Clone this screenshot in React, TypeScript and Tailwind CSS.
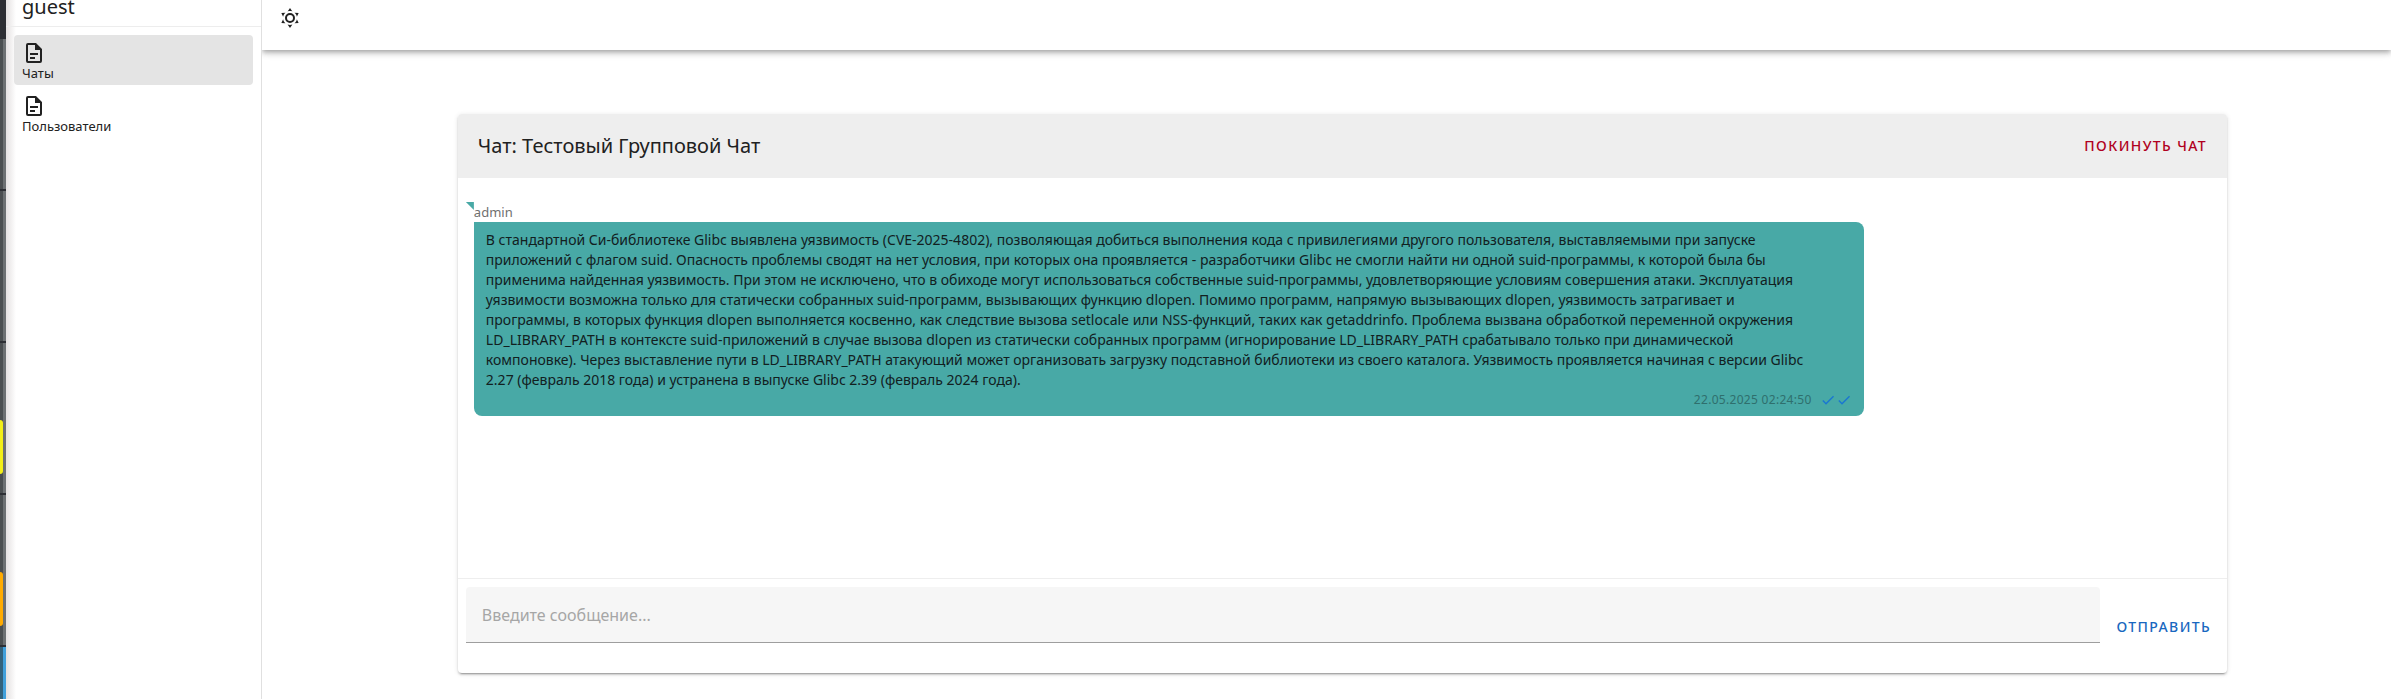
const PATHS = {
  file: "M6,2A2,2 0 0,0 4,4V20A2,2 0 0,0 6,22H18A2,2 0 0,0 20,20V8L14,2H6M6,4H13V9H18V20H6V4M8,12V14H16V12H8M8,16V18H13V16H8Z",
  sun: "M12,7A5,5 0 0,1 17,12A5,5 0 0,1 12,17A5,5 0 0,1 7,12A5,5 0 0,1 12,7M12,9A3,3 0 0,0 9,12A3,3 0 0,0 12,15A3,3 0 0,0 15,12A3,3 0 0,0 12,9M12,2L14.39,5.42C13.65,5.15 12.84,5 12,5C11.16,5 10.35,5.15 9.61,5.42L12,2M3.34,7L7.5,6.65C6.9,7.16 6.36,7.78 5.94,8.5C5.5,9.24 5.25,10 5.11,10.79L3.34,7M3.36,17L5.12,13.23C5.26,14 5.53,14.78 5.95,15.5C6.37,16.24 6.91,16.86 7.5,17.37L3.36,17M20.65,7L18.88,10.79C18.74,10 18.47,9.23 18.05,8.5C17.63,7.78 17.1,7.15 16.5,6.64L20.65,7M20.64,17L16.5,17.36C17.09,16.85 17.62,16.22 18.04,15.5C18.46,14.77 18.73,14 18.87,13.21L20.64,17M12,22L9.59,18.56C10.33,18.83 11.14,19 12,19C12.82,19 13.63,18.83 14.37,18.56L12,22Z",
  check: "M21,7L9,19L3.5,13.5L4.91,12.09L9,16.17L19.59,5.59L21,7Z",
};

function Icon({ name, className }: { name: keyof typeof PATHS; className: string }) {
  return (
    <svg viewBox="0 0 24 24" fill="currentColor" aria-hidden="true" className={className}>
      <path d={PATHS[name]} />
    </svg>
  );
}

const NAV = [
  { label: "Чаты", active: true },
  { label: "Пользователи", active: false },
];

const MESSAGE =
  "В стандартной Си-библиотеке Glibc выявлена уязвимость (CVE-2025-4802), позволяющая добиться выполнения кода с привилегиями другого пользователя, выставляемыми при запуске приложений с флагом suid. Опасность проблемы сводят на нет условия, при которых она проявляется - разработчики Glibc не смогли найти ни одной suid-программы, к которой была бы применима найденная уязвимость. При этом не исключено, что в обиходе могут использоваться собственные suid-программы, удовлетворяющие условиям совершения атаки. Эксплуатация уязвимости возможна только для статически собранных suid-программ, вызывающих функцию dlopen. Помимо программ, напрямую вызывающих dlopen, уязвимость затрагивает и программы, в которых функция dlopen выполняется косвенно, как следствие вызова setlocale или NSS-функций, таких как getaddrinfo. Проблема вызвана обработкой переменной окружения LD_LIBRARY_PATH в контексте suid-приложений в случае вызова dlopen из статически собранных программ (игнорирование LD_LIBRARY_PATH срабатывало только при динамической компоновке). Через выставление пути в LD_LIBRARY_PATH атакующий может организовать загрузку подставной библиотеки из своего каталога. Уязвимость проявляется начиная с версии Glibc 2.27 (февраль 2018 года) и устранена в выпуске Glibc 2.39 (февраль 2024 года).";

function Backdrop() {
  return (
    <div aria-hidden="true" className="flex w-[6px] shrink-0 flex-col bg-[#2c2e33]">
      <div className="h-[39px]" />
      <Slot />
      <Slot />
      <Slot chip="bg-[#f2ef18]" />
      <Slot chip="bg-[#ffab00]" />
      <div className="flex grow">
        <div className="w-[3px] bg-[#32617b]" />
        <div className="w-[3px] bg-[#41a0db]" />
      </div>
    </div>
  );
}

function Slot({ chip }: { chip?: string }) {
  return (
    <div className="mb-[2px] flex h-[150px] shrink-0">
      <div className="flex w-[3px] items-end bg-[#4a4e50] pb-[19px]">
        {chip && <div className={`h-[54px] w-full rounded-r-[3px] ${chip}`} />}
      </div>
      <div className="w-[3px] bg-[#6c7072]" />
    </div>
  );
}

function Sidebar() {
  return (
    <nav className="flex w-[256px] shrink-0 flex-col border-r border-[#e0e0e0] bg-white bg-linear-to-r from-[#e4e1e1] to-white to-[10px]">
      <div className="h-[27px] border-b border-[#ededed] pl-4 text-xl leading-[14px]">guest</div>
      <ul className="flex flex-col gap-[3px] p-2">
        {NAV.map((item) => (
          <li key={item.label}>
            <a
              href="#"
              className={`flex h-[50px] flex-col rounded px-2 pt-[6px] ${item.active ? "bg-[#e4e4e4]" : ""}`}
            >
              <Icon name="file" className="size-6" />
              <span className="text-[13px] leading-4">{item.label}</span>
            </a>
          </li>
        ))}
      </ul>
    </nav>
  );
}

function Message() {
  return (
    <article className="relative w-4/5">
      <span
        aria-hidden="true"
        className="absolute top-0 -left-2 size-2 bg-[#48a9a6] [clip-path:polygon(0_0,100%_0,100%_100%)]"
      />
      <h2 className="text-[13px] leading-5 text-[#6f6f6f]">admin</h2>
      <div className="rounded-lg rounded-tl-none bg-[#48a9a6] px-3 py-2">
        <p className="pr-11 text-sm leading-5 text-[#12201f]">{MESSAGE}</p>
        <div className="flex items-center justify-end pt-[2px] text-xs leading-4 tracking-wide text-[#2f6f6d]">
          <time className="pr-2">22.05.2025 02:24:50</time>
          <Icon name="check" className="size-4 text-[#1976d2]" />
          <Icon name="check" className="size-4 text-[#1976d2]" />
        </div>
      </div>
    </article>
  );
}

export default function App() {
  return (
    <div className="flex min-h-screen bg-white font-['Noto_Sans',sans-serif] text-[#212121]">
      <Backdrop />
      <Sidebar />
      <div className="flex min-w-0 grow flex-col">
        <header className="h-[50px] shrink-0 pl-4 shadow-[0_2px_4px_-1px_rgba(0,0,0,0.2),0_4px_5px_0_rgba(0,0,0,0.14),0_1px_10px_0_rgba(0,0,0,0.12)] [clip-path:inset(0_0_-20px_0)]">
          <button aria-label="Сменить тему" className="mt-[6px] block size-6">
            <Icon name="sun" className="size-6" />
          </button>
        </header>
        <main className="grow pt-16 pr-[7.7%] pb-[26px] pl-[9.2%]">
          <section className="flex h-full flex-col overflow-hidden rounded shadow-[0_3px_1px_-2px_rgba(0,0,0,0.2),0_2px_2px_0_rgba(0,0,0,0.14),0_1px_5px_0_rgba(0,0,0,0.12)]">
            <div className="flex h-16 shrink-0 items-center justify-between bg-[#eeeeee] px-5">
              <h1 className="text-xl">Чат: Тестовый Групповой Чат</h1>
              <button className="text-sm font-medium tracking-widest text-[#b00020] uppercase">Покинуть чат</button>
            </div>
            <div className="grow px-4 pt-6">
              <Message />
            </div>
            <form className="flex shrink-0 gap-4 border-t border-[#eeeeee] p-2 pr-4 pb-[30px]">
              <input
                type="text"
                aria-label="Сообщение"
                placeholder="Введите сообщение..."
                className="h-14 min-w-0 grow rounded-t border-b border-[#9e9e9e] bg-[#f6f6f6] px-4 text-base outline-none placeholder:text-[#a6a6a6]"
              />
              <button type="button" className="mt-6 text-sm font-medium tracking-widest text-[#1867c0] uppercase">
                Отправить
              </button>
            </form>
          </section>
        </main>
      </div>
    </div>
  );
}
